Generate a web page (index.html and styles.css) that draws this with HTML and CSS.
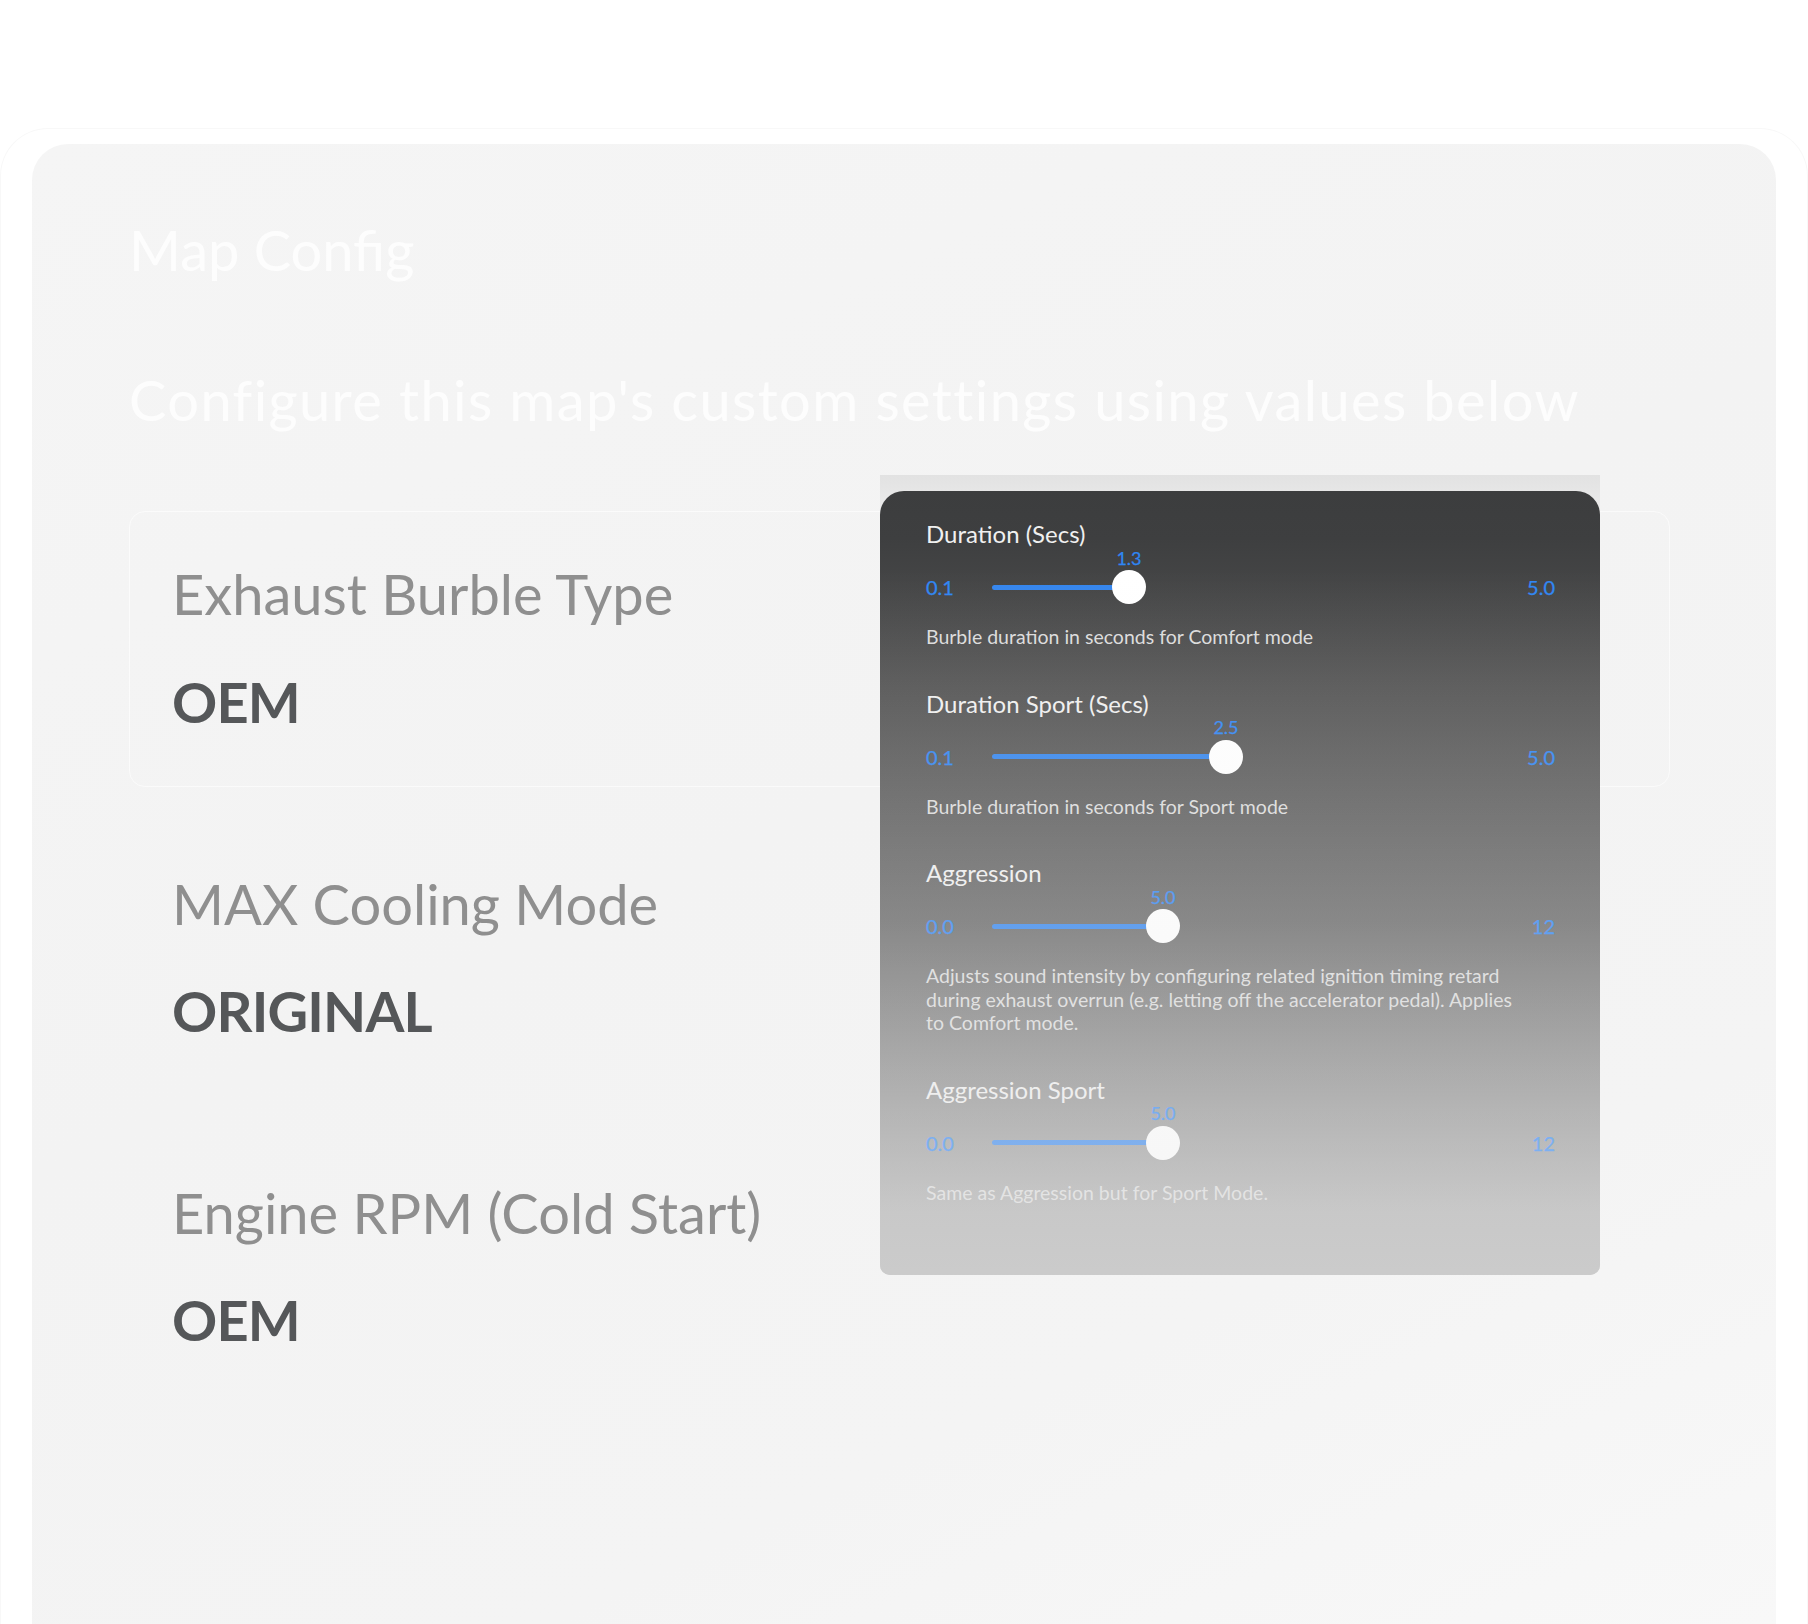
FILE: index.html
```html
<!DOCTYPE html>
<html lang="en">
<head>
    <meta charset="UTF-8">
    <title>Map Config</title>
    <link rel="stylesheet" href="styles.css">
</head>
<body>
<div class="frame">
    <div class="panel">
        <h1 class="title">Map Config</h1>
        <p class="subtitle">Configure this map's custom settings using values below</p>

        <div class="settings">
            <div class="setting active">
                <p class="name">Exhaust Burble Type</p>
                <p class="value">OEM</p>

                <!-- popover with the custom burble values -->
                <div class="popover">
                    <div class="sheet">
                        <div class="block">
                            <p class="b_title">Duration (Secs)</p>
                            <div class="slider">
                                <span class="min">0.1</span>
                                <div class="track">
                                    <div class="fill" style="width:137px"></div>
                                    <span class="val" style="left:137px">1.3</span>
                                    <span class="thumb" style="left:137px"></span>
                                </div>
                                <span class="max">5.0</span>
                            </div>
                            <p class="b_desc">Burble duration in seconds for Comfort mode</p>
                        </div>
                        <div class="block">
                            <p class="b_title">Duration Sport (Secs)</p>
                            <div class="slider">
                                <span class="min">0.1</span>
                                <div class="track">
                                    <div class="fill" style="width:234px"></div>
                                    <span class="val" style="left:234px">2.5</span>
                                    <span class="thumb" style="left:234px"></span>
                                </div>
                                <span class="max">5.0</span>
                            </div>
                            <p class="b_desc">Burble duration in seconds for Sport mode</p>
                        </div>
                        <div class="block">
                            <p class="b_title">Aggression</p>
                            <div class="slider">
                                <span class="min">0.0</span>
                                <div class="track">
                                    <div class="fill" style="width:171px"></div>
                                    <span class="val" style="left:171px">5.0</span>
                                    <span class="thumb" style="left:171px"></span>
                                </div>
                                <span class="max">12</span>
                            </div>
                            <p class="b_desc">Adjusts sound intensity by configuring related ignition timing retard during exhaust overrun (e.g. letting off the accelerator pedal). Applies to Comfort mode.</p>
                        </div>
                        <div class="block">
                            <p class="b_title">Aggression Sport</p>
                            <div class="slider">
                                <span class="min">0.0</span>
                                <div class="track">
                                    <div class="fill" style="width:171px"></div>
                                    <span class="val" style="left:171px">5.0</span>
                                    <span class="thumb" style="left:171px"></span>
                                </div>
                                <span class="max">12</span>
                            </div>
                            <p class="b_desc">Same as Aggression but for Sport Mode.</p>
                        </div>
                    </div>
                </div>
            </div>

            <div class="setting">
                <p class="name">MAX Cooling Mode</p>
                <p class="value">ORIGINAL</p>
            </div>

            <div class="setting">
                <p class="name">Engine RPM (Cold Start)</p>
                <p class="value">OEM</p>
            </div>
        </div>
    </div>
</div>
</body>
</html>
```

FILE: styles.css
```css
*{margin: 0;padding: 0;box-sizing: border-box;}
html,body{height: 100%;}
body{background: #fff;font-family: Lato, "Open Sans", sans-serif;overflow: hidden;}

.frame{margin-top: 128px;height: 1496px;padding: 15px 31px 0;border: 1px solid #f8f8f8;border-bottom: none;border-radius: 48px 48px 0 0;}
.panel{height: 100%;padding: 72px 106px 0 97px;border-radius: 36px 36px 0 0;background: linear-gradient(155deg, #f5f5f5 0%, #f3f3f3 45%, #f4f4f4 75%, #f8f8f8 100%);}

.title{font-size: 56px;line-height: 1.2;font-weight: 400;color: #fdfdfd;}
.subtitle{margin-top: 83px;font-size: 56px;line-height: 1.2;letter-spacing: 1.4px;color: #fdfdfd;white-space: nowrap;}

.settings{margin-top: 78px;display: flex;flex-direction: column;gap: 34px;}
.setting{position: relative;padding: 48px 40px 51px 42px;border: 1px solid transparent;border-radius: 16px;}
.setting.active{border-color: rgba(255,255,255,.6);}
.name{font-size: 56px;line-height: 1.2;color: #8f8f8f;}
.value{margin-top: 40px;font-size: 56px;line-height: 1.2;font-weight: 700;letter-spacing: -0.8px;color: #555759;}

/* popover */
.popover{position: absolute;left: 750px;top: -37px;width: 720px;height: 800px;padding-top: 16px;background: linear-gradient(#e2e2e2 0, #e6e6e6 16px, rgba(240,240,240,0) 60px);z-index: 2;}
.sheet{position: relative;height: 784px;padding: 28px 45px 0 46px;border-radius: 24px 24px 10px 10px;overflow: hidden;background: linear-gradient(#3c3d3e 0%, #3e3f40 6%, #535353 25%, #676767 55%, #818181 70%, #aaa 92%, #aaa 100%);}
.sheet::after{content: "";position: absolute;left: 0;top: 0;right: 0;bottom: 0;background: linear-gradient(rgba(236,236,236,0) 0%, rgba(236,236,236,0) 10%, rgba(236,236,236,.5) 100%);pointer-events: none;}

.block{margin-bottom: 40px;}
.b_title{font-size: 24px;line-height: 30px;color: #f0f0f0;}
.slider{margin-top: 21px;height: 34px;display: flex;align-items: center;}
.min,.max{font-size: 20px;line-height: 24px;color: #2f86f4;-webkit-text-stroke: 0.25px #2f86f4;}
.min{flex: 0 0 66px;}
.max{margin-left: auto;text-align: right;}
.track{position: relative;flex: 1;height: 5px;margin-right: 60px;}
.fill{height: 5px;border-radius: 3px;background: #3586ee;}
.val{position: absolute;top: -38px;transform: translateX(-50%);font-size: 18px;line-height: 22px;color: #2f86f4;-webkit-text-stroke: 0.25px #2f86f4;}
.thumb{position: absolute;top: 50%;width: 34px;height: 34px;border-radius: 50%;background: #fff;transform: translate(-50%,-50%);}
.b_desc{margin-top: 21px;max-width: 600px;font-size: 19.5px;line-height: 23.5px;color: #dcdcdc;}
```
